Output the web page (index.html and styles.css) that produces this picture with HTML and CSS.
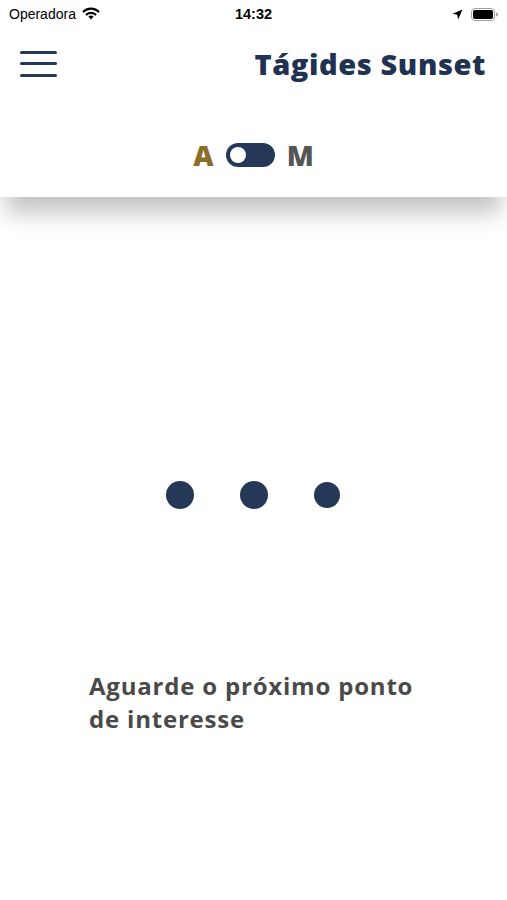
FILE: index.html
```html
<!DOCTYPE html>
<html lang="pt">
<head>
  <meta charset="UTF-8" />
  <meta name="viewport" content="width=device-width, initial-scale=1.0"/>
  <title>Tágides Sunset</title>
  <link rel="stylesheet" href="styles.css">
</head>
<body>
  <header class="top">
    <div class="status">
      <div class="status-left">
        <span>Operadora</span>
        <svg class="wifi" width="18" height="13" viewBox="0 0 18 13">
          <path d="M9 12.5 L6.4 9.6 A3.8 3.8 0 0 1 11.6 9.6 Z" fill="#000"/>
          <path d="M4.6 7.6 A6.4 6.4 0 0 1 13.4 7.6" stroke="#000" stroke-width="2.1" fill="none" stroke-linecap="round"/>
          <path d="M1.6 4.6 A10.6 10.6 0 0 1 16.4 4.6" stroke="#000" stroke-width="2.1" fill="none" stroke-linecap="round"/>
        </svg>
      </div>
      <div class="clock">14:32</div>
      <div class="status-right">
        <svg width="11" height="11" viewBox="0 0 11 11">
          <path d="M10.5 0.5 L0.5 4.8 L5.2 5.8 L6.2 10.5 Z" fill="#000"/>
        </svg>
        <svg width="27" height="13" viewBox="0 0 27 13">
          <rect x="0.5" y="0.5" width="23" height="12" rx="3.5" fill="none" stroke="#a0a0a0"/>
          <rect x="2" y="2" width="20" height="9" rx="2" fill="#000"/>
          <path d="M25 4.5 a1.6 1.6 0 0 1 0 4 Z" fill="#a0a0a0"/>
        </svg>
      </div>
    </div>

    <nav class="navbar">
      <button class="menu" aria-label="Menu">
        <span></span><span></span><span></span>
      </button>
      <h1 class="brand">Tágides Sunset</h1>
    </nav>

    <div class="mode">
      <span class="mode-a">A</span>
      <span class="switch"><span class="knob"></span></span>
      <span class="mode-m">M</span>
    </div>
  </header>

  <main class="content">
    <div class="loader">
      <span class="dot"></span>
      <span class="dot"></span>
      <span class="dot small"></span>
    </div>
    <p class="waiting">Aguarde o próximo ponto de interesse</p>
  </main>
</body>
</html>
```

FILE: styles.css
```css
body {
  margin: 0;
  font-family: 'Open Sans', 'Noto Sans', sans-serif;
  background-color: #fff;
  overflow: hidden;
}
.top {
  position: relative;
  z-index: 1;
  background-color: #fff;
  height: 197px;
  box-shadow: 0 22px 22px -6px rgba(0,0,0,0.24);
}
.status {
  height: 28px;
  display: flex;
  align-items: center;
  justify-content: space-between;
  padding: 0 9px;
  font-family: 'Liberation Sans', sans-serif;
  font-size: 14px;
  color: #000;
}
.status-left {
  display: flex;
  align-items: center;
  gap: 6px;
  width: 140px;
}
.wifi {
  margin-top: -2px;
}
.clock {
  font-weight: bold;
  font-size: 14.5px;
}
.status-right {
  display: flex;
  align-items: center;
  justify-content: flex-end;
  gap: 8px;
  width: 140px;
}
.navbar {
  display: flex;
  align-items: center;
  justify-content: space-between;
  padding: 16px 21px 0 20px;
}
.menu {
  background: none;
  border: none;
  padding: 0;
  width: 37px;
  display: flex;
  flex-direction: column;
  gap: 8.5px;
}
.menu span {
  display: block;
  height: 3px;
  border-radius: 2px;
  background-color: #253858;
}
.brand {
  margin: 0;
  font-size: 29px;
  font-weight: 800;
  letter-spacing: 0.6px;
  color: #1f3251;
}
.mode {
  display: flex;
  align-items: center;
  justify-content: center;
  gap: 12px;
  margin-top: 53px;
  font-size: 28px;
  font-weight: 800;
}
.mode-a {
  color: #8a6d2a;
}
.mode-m {
  color: #555;
}
.switch {
  width: 49px;
  height: 24px;
  border-radius: 12px;
  background-color: #253858;
  display: flex;
  align-items: center;
  padding-left: 4px;
  box-sizing: border-box;
}
.knob {
  width: 16px;
  height: 16px;
  border-radius: 50%;
  background-color: #fff;
}
.content {
  padding: 0 89px;
}
.loader {
  display: flex;
  justify-content: center;
  align-items: center;
  gap: 46px;
  margin-top: 284px;
  height: 28px;
  padding-right: 2px;
}
.dot {
  width: 28px;
  height: 28px;
  border-radius: 50%;
  background-color: #253858;
}
.dot.small {
  width: 26px;
  height: 26px;
}
.waiting {
  margin: 160px 0 0;
  font-size: 24px;
  font-weight: 700;
  letter-spacing: 0.8px;
  line-height: 33px;
  color: #4a4a4a;
}
```
